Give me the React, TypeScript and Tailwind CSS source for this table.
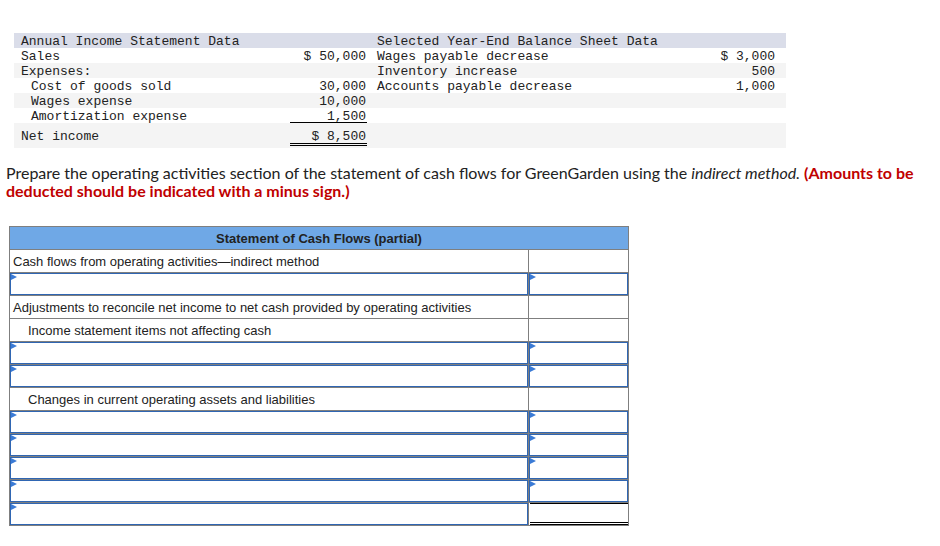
import React from 'react';

const mono = "font-['Liberation_Mono','Courier_New',monospace]";

type DataRow = {
  label: string;
  indent?: boolean;
  amount?: string;
  rightLabel?: string;
  rightAmount?: string;
  gray?: boolean;
  underline?: boolean;
};

const dataRows: DataRow[] = [
  { label: 'Sales', amount: '$ 50,000', rightLabel: 'Wages payable decrease', rightAmount: '$ 3,000' },
  { label: 'Expenses:', rightLabel: 'Inventory increase', rightAmount: '500', gray: true },
  { label: 'Cost of goods sold', indent: true, amount: '30,000', rightLabel: 'Accounts payable decrease', rightAmount: '1,000' },
  { label: 'Wages expense', indent: true, amount: '10,000', gray: true },
  { label: 'Amortization expense', indent: true, amount: '1,500', underline: true },
];

const Flag = () => (
  <svg width="6" height="7" viewBox="0 0 6 7" className="block">
    <polygon points="0,0 6,3 0,6" fill="#3b7bd6" />
  </svg>
);

const InputCell = ({ wide }: { wide?: boolean }) => (
  <div className={wide ? 'w-[519px] h-full border-r border-[#7f7f7f]' : 'flex-1 h-full'}>
    <div className="h-full w-full border border-[#2f66b3] bg-white">
      <Flag />
    </div>
  </div>
);

const TextRow = ({ text, indent }: { text: string; indent?: boolean }) => (
  <div className="flex h-[23px] border-b border-[#7f7f7f]">
    <div className={`w-[519px] border-r border-[#7f7f7f] pt-[4px] leading-[16px] ${indent ? 'pl-[18px]' : 'pl-[3px]'}`}>
      {text}
    </div>
    <div className="flex-1" />
  </div>
);

const InputRow = () => (
  <div className="flex h-[23px] border-b border-[#7f7f7f]">
    <InputCell wide />
    <InputCell />
  </div>
);

export default function App() {
  return (
    <div className="w-[940px] h-[546px] bg-white text-[#222] overflow-hidden pt-[33px]">
      {/* Given data */}
      <div className={`ml-[14px] w-[772px] text-[13px] leading-[13px] ${mono}`}>
        <div className="flex h-[15px] pt-[2px] bg-[#dadde9]">
          <div className="w-[363px] pl-[7px]">Annual Income Statement Data</div>
          <div className="flex-1">Selected Year-End Balance Sheet Data</div>
        </div>
        {dataRows.map((r) => (
          <div key={r.label} className={`flex h-[15px] ${r.gray ? 'bg-[#f4f4f4]' : 'bg-white'}`}>
            <div className={`w-[276px] pt-[2px] ${r.indent ? 'pl-[17px]' : 'pl-[7px]'}`}>{r.label}</div>
            <div className={`w-[77px] h-full pt-[2px] text-right pr-[1px] ${r.underline ? 'border-b border-black' : ''}`}>
              {r.amount}
            </div>
            <div className="w-[10px]" />
            <div className="flex-1 pt-[2px]">{r.rightLabel}</div>
            <div className="w-[80px] pt-[2px] text-right">{r.rightAmount}</div>
            <div className="w-[11px]" />
          </div>
        ))}
        <div className="flex h-[25px] bg-[#f4f4f4]">
          <div className="w-[276px] pl-[7px] pt-[7px]">Net income</div>
          <div className="w-[77px] h-[23px] text-right pr-[1px] pt-[7px] border-b-[3px] border-double border-black">
            $ 8,500
          </div>
          <div className="flex-1" />
        </div>
      </div>

      {/* Instructions */}
      <p className="mt-[16px] pl-[6px] pr-[10px] text-[16px] leading-[18px] font-['Lato','Liberation_Sans',sans-serif] text-[#222]">
        Prepare the operating activities section of the statement of cash flows for GreenGarden using the{' '}
        <i>indirect method.</i>{' '}
        <b className="text-[#c00000]">(Amounts to be deducted should be indicated with a minus sign.)</b>
      </p>

      {/* Cash flow statement */}
      <div className="mt-[26px] ml-[9px] w-[620px] border-l border-r border-t border-[#7f7f7f] text-[13px] font-['Liberation_Sans',Arial,sans-serif] text-[#222]">
        <div className="h-[23px] pt-[4px] leading-[16px] text-center bg-[#6fa8e6] border-b border-[#7f7f7f] font-bold">
          Statement of Cash Flows (partial)
        </div>
        <TextRow text="Cash flows from operating activities—indirect method" />
        <InputRow />
        <TextRow text="Adjustments to reconcile net income to net cash provided by operating activities" />
        <TextRow text="Income statement items not affecting cash" indent />
        <InputRow />
        <InputRow />
        <TextRow text="Changes in current operating assets and liabilities" indent />
        <InputRow />
        <InputRow />
        <InputRow />
        <InputRow />
        <div className="flex h-[23px] border-b border-[#7f7f7f]">
          <InputCell wide />
          <div className="flex-1 h-full pl-[1px]">
            <div className="h-full w-full border-t border-black border-b-[3px] border-double" />
          </div>
        </div>
      </div>
    </div>
  );
}
